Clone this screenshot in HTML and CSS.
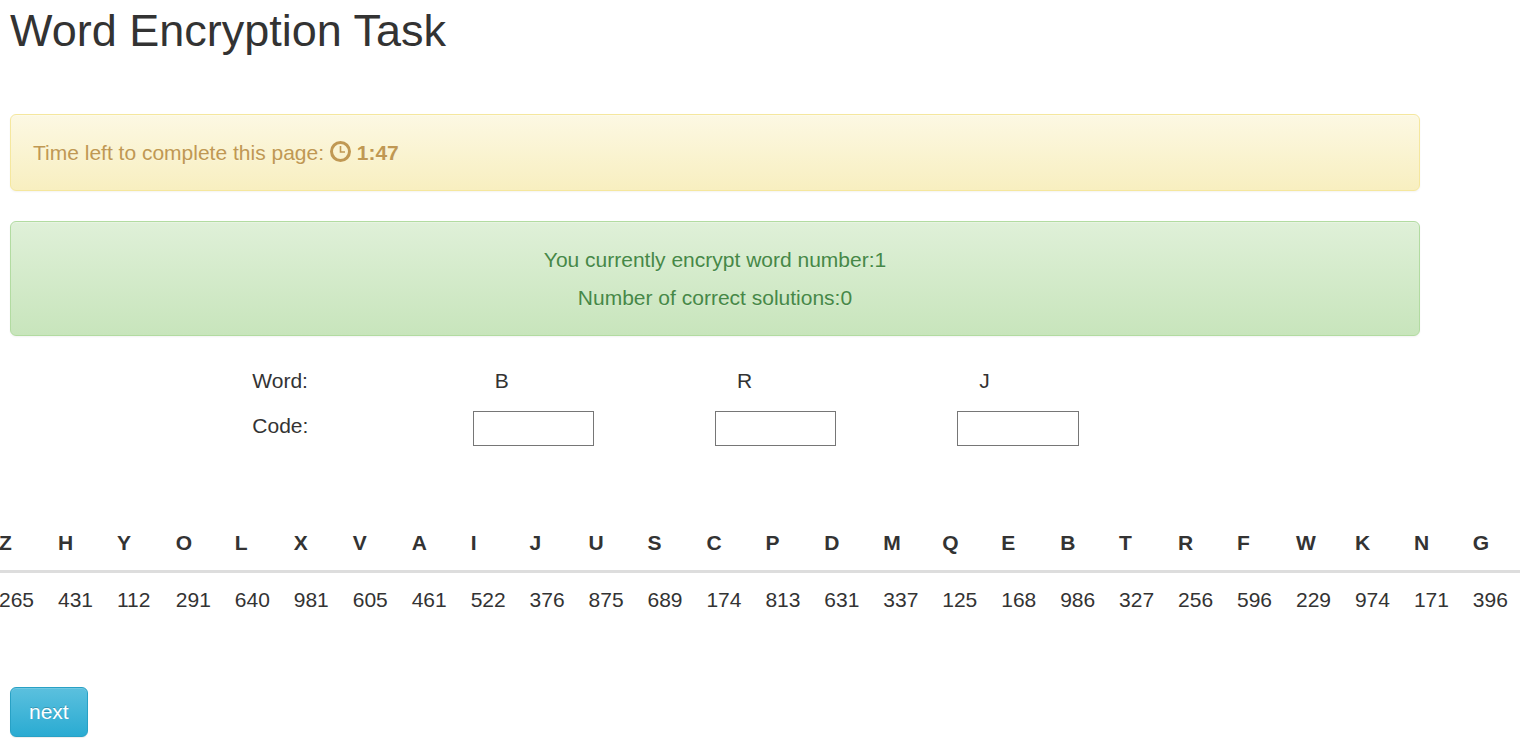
FILE: index.html
```
<!DOCTYPE html>
<html lang="en">
<head>
<meta charset="utf-8">
<title>Word Encryption Task</title>
<link rel="stylesheet" href="styles.css">
</head>
<body>
<main class="page">
  <div class="container">
    <h1 class="title">Word Encryption Task</h1>
    <div class="alert alert-warning">
      <p>Time left to complete this page:
        <svg class="clock" viewBox="0 0 21 21" aria-hidden="true"><circle cx="10.5" cy="10.5" r="9" fill="none" stroke="currentColor" stroke-width="3"/><path d="M10.5 5V11H15" fill="none" stroke="currentColor" stroke-width="1.6"/></svg>
        <strong>1:47</strong></p>
    </div>
    <div class="alert alert-success">
      <p>You currently encrypt word number:1</p>
      <p>Number of correct solutions:0</p>
    </div>
    <form class="task" id="task">
      <span class="label">Word:</span>
      <label class="letter" for="code1">B</label>
      <label class="letter" for="code2">R</label>
      <label class="letter" for="code3">J</label>
      <span class="label">Code:</span>
      <input class="code" id="code1" type="text">
      <input class="code" id="code2" type="text">
      <input class="code" id="code3" type="text">
    </form>
  </div>
  <div class="key">
    <table class="key-table">
      <thead><tr><th>Z</th><th>H</th><th>Y</th><th>O</th><th>L</th><th>X</th><th>V</th><th>A</th><th>I</th><th>J</th><th>U</th><th>S</th><th>C</th><th>P</th><th>D</th><th>M</th><th>Q</th><th>E</th><th>B</th><th>T</th><th>R</th><th>F</th><th>W</th><th>K</th><th>N</th><th>G</th></tr></thead>
      <tbody><tr><td>265</td><td>431</td><td>112</td><td>291</td><td>640</td><td>981</td><td>605</td><td>461</td><td>522</td><td>376</td><td>875</td><td>689</td><td>174</td><td>813</td><td>631</td><td>337</td><td>125</td><td>168</td><td>986</td><td>327</td><td>256</td><td>596</td><td>229</td><td>974</td><td>171</td><td>396</td></tr></tbody>
    </table>
  </div>
  <button class="next" type="submit" form="task">next</button>
</main>
</body>
</html>
```
FILE: styles.css
```
* { box-sizing: border-box; }
body {
  margin: 0;
  background: #fff;
  color: #333;
  font: 21px/30px "Liberation Sans", Arial, sans-serif;
}
p { margin: 0; }
.page { padding: 6px 8px 5px 10px; }
.container { margin-right: 100px; }
.title {
  margin: 0 0 58px;
  font-size: 45px;
  font-weight: 400;
  line-height: 50px;
}
.alert {
  display: flex;
  flex-direction: column;
  gap: 8px;
  margin-bottom: 30px;
  padding: 23px 22px 22px;
  border: 1px solid;
  border-radius: 6px;
  text-shadow: 0 1px 0 rgba(255, 255, 255, .2);
  box-shadow: inset 0 1px 0 rgba(255, 255, 255, .25), 0 1px 2px rgba(0, 0, 0, .05);
}
.alert-warning {
  border-color: #f5e79e;
  background: linear-gradient(#fcf8e3, #f8efc0);
  color: #c09853;
}
.alert-success {
  border-color: #b2dba1;
  background: linear-gradient(#dff0d8, #c8e5bc);
  color: #468847;
  text-align: center;
}
.clock { width: 21px; height: 21px; vertical-align: -2px; }
.task {
  display: grid;
  grid-template-columns: repeat(4, 1fr);
  row-gap: 15px;
  margin: 0 -22px;
  padding: 0 calc((100% + 44px) / 6);
}
.label, .letter { padding-left: 22px; }
.code {
  width: 50%;
  height: 35px;
  padding: 2px 4px;
  border: 1px solid #767676;
  border-radius: 0;
  background: #fff;
  color: inherit;
  font: inherit;
}
.key { margin: 70px 0 60px -23px; }
.key-table {
  width: 100%;
  table-layout: fixed;
  border-collapse: separate;
  border-spacing: 0;
}
.key-table th, .key-table td { padding: 12px; text-align: left; }
.key-table th { border-bottom: 3px solid #ddd; }
.next {
  display: block;
  height: 50px;
  padding: 0 18px;
  border: 1px solid #28a1c5;
  border-radius: 6px;
  background: linear-gradient(#5bc0de, #2aabd2);
  box-shadow: inset 0 1px 0 rgba(255, 255, 255, .15), 0 1px 1px rgba(0, 0, 0, .075);
  color: #fff;
  font: inherit;
  text-shadow: 0 -1px 0 rgba(0, 0, 0, .2);
}
```
